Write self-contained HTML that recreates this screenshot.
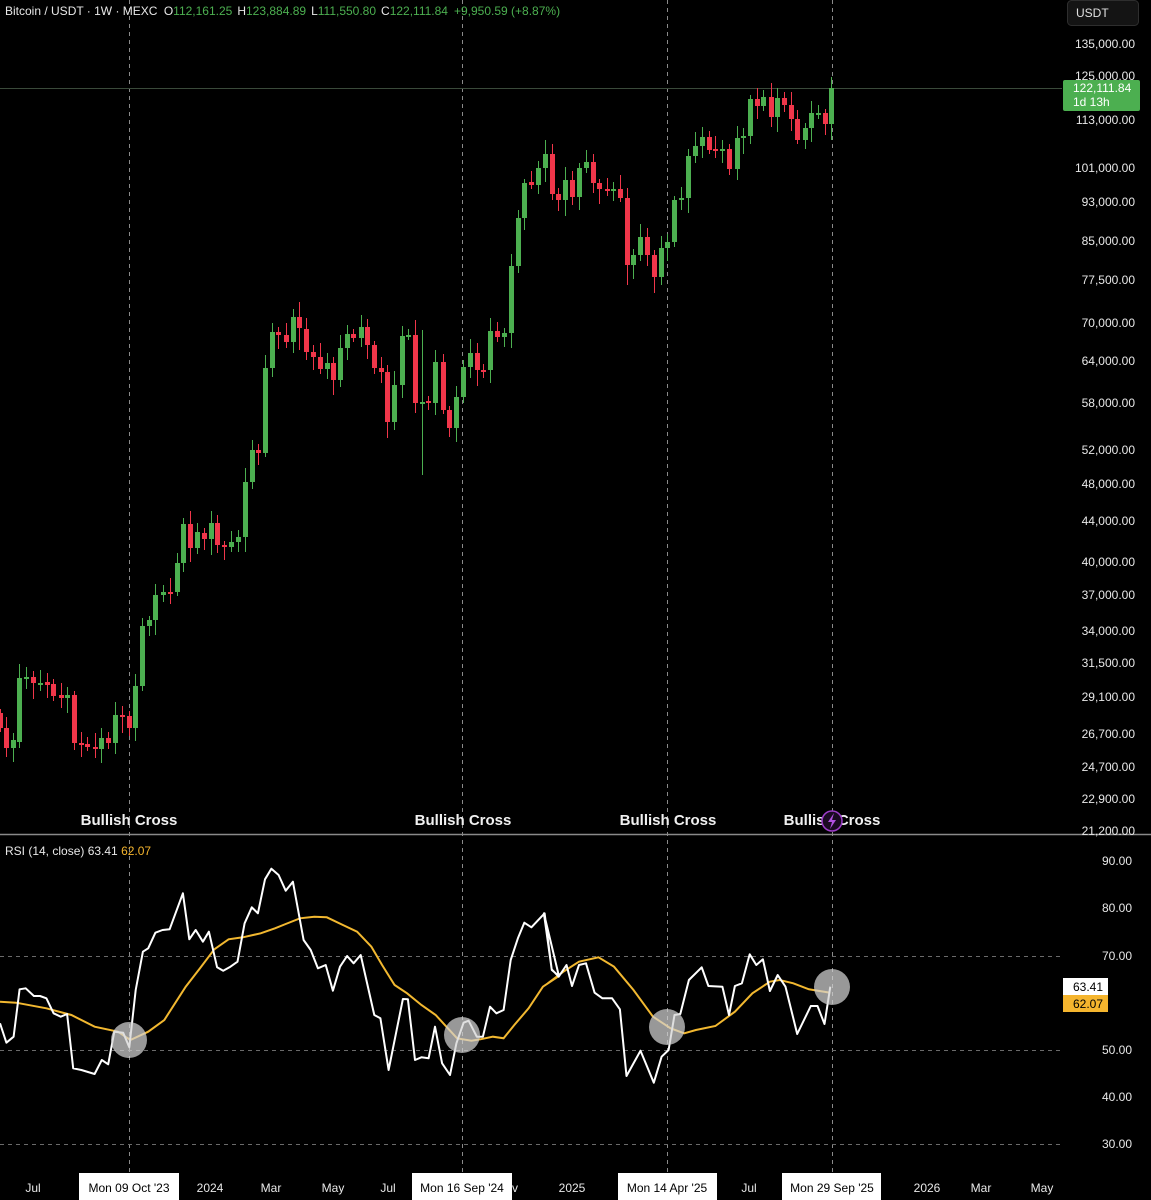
<!DOCTYPE html>
<html><head><meta charset="utf-8"><style>
html,body{margin:0;padding:0;background:#000;width:1151px;height:1200px;overflow:hidden;font-family:"Liberation Sans",sans-serif}
svg{position:absolute;left:0;top:0}
</style></head><body>
<svg id="s" width="1151" height="1200" xmlns="http://www.w3.org/2000/svg" font-family="Liberation Sans, sans-serif">
<rect width="1151" height="1200" fill="#000"/>
<g stroke="#8a8a8a" stroke-width="1" stroke-dasharray="4,4">
<line x1="129.5" y1="0" x2="129.5" y2="1172"/>
<line x1="462.5" y1="0" x2="462.5" y2="1172"/>
<line x1="667.5" y1="0" x2="667.5" y2="1172"/>
<line x1="832.5" y1="0" x2="832.5" y2="1172"/>
</g>
<g stroke="#6a6a6a" stroke-width="1" stroke-dasharray="4,4">
<line x1="0" y1="956.5" x2="1060" y2="956.5"/>
<line x1="0" y1="1050.5" x2="1060" y2="1050.5"/>
<line x1="0" y1="1144.5" x2="1060" y2="1144.5"/>
</g>
<line x1="0" y1="88.5" x2="1062" y2="88.5" stroke="#3a4a3a" stroke-width="1"/>
<line x1="0" y1="834.5" x2="1151" y2="834.5" stroke="#8a8a8a" stroke-width="1.5"/>
<g id="candles"></g>
<g id="rsi"></g>
<!-- header -->
<text x="5" y="15" font-size="12" fill="#e8e8e8">Bitcoin / USDT · 1W · MEXC <tspan dx="3">O</tspan><tspan fill="#4caf50">112,161.25</tspan><tspan dx="5">H</tspan><tspan fill="#4caf50">123,884.89</tspan><tspan dx="5">L</tspan><tspan fill="#4caf50">111,550.80</tspan><tspan dx="5">C</tspan><tspan fill="#4caf50">122,111.84</tspan><tspan dx="6" fill="#4caf50">+9,950.59 (+8.87%)</tspan></text>
<!-- USDT -->
<rect x="1067.5" y="0.5" width="71" height="25" rx="4" fill="#141414" stroke="#2e2e2e"/>
<text x="1076" y="17" font-size="12" fill="#e0e0e0">USDT</text>
<g font-size="12" fill="#e8e8e8" text-anchor="end">
<text x="1135" y="48">135,000.00</text>
<text x="1135" y="80">125,000.00</text>
<text x="1135" y="124">113,000.00</text>
<text x="1135" y="172">101,000.00</text>
<text x="1135" y="206">93,000.00</text>
<text x="1135" y="245">85,000.00</text>
<text x="1135" y="284">77,500.00</text>
<text x="1135" y="327">70,000.00</text>
<text x="1135" y="365">64,000.00</text>
<text x="1135" y="407">58,000.00</text>
<text x="1135" y="454">52,000.00</text>
<text x="1135" y="488">48,000.00</text>
<text x="1135" y="525">44,000.00</text>
<text x="1135" y="566">40,000.00</text>
<text x="1135" y="599">37,000.00</text>
<text x="1135" y="635">34,000.00</text>
<text x="1135" y="667">31,500.00</text>
<text x="1135" y="701">29,100.00</text>
<text x="1135" y="738">26,700.00</text>
<text x="1135" y="771">24,700.00</text>
<text x="1135" y="803">22,900.00</text>
<text x="1135" y="835">21,200.00</text>
<text x="1132" y="865">90.00</text>
<text x="1132" y="912">80.00</text>
<text x="1132" y="960">70.00</text>
<text x="1132" y="1054">50.00</text>
<text x="1132" y="1101">40.00</text>
<text x="1132" y="1148">30.00</text>
</g>
<rect x="0" y="835.5" width="1151" height="0" />
<rect x="1063" y="80" width="77" height="31" rx="2" fill="#4caf50"/>
<text x="1073" y="92" font-size="12" fill="#fff">122,111.84</text>
<text x="1073" y="106" font-size="12" fill="#fff">1d 13h</text>
<rect x="1063" y="978" width="45" height="17" fill="#fff"/>
<text x="1103" y="991" font-size="12" fill="#000" text-anchor="end">63.41</text>
<rect x="1063" y="995" width="45" height="17" fill="#f5b52e"/>
<text x="1103" y="1008" font-size="12" fill="#000" text-anchor="end">62.07</text>
<!-- RSI title -->
<text x="5" y="855" font-size="12" fill="#e8e8e8">RSI (14, close)  63.41 <tspan fill="#f5b52e">62.07</tspan></text>
<!-- Bullish cross -->
<g font-size="15" font-weight="bold" fill="#f0f0f0" text-anchor="middle">
<text x="129" y="825">Bullish Cross</text>
<text x="463" y="825">Bullish Cross</text>
<text x="668" y="825">Bullish Cross</text>
<text x="832" y="825">Bullish Cross</text>
</g>
<circle cx="832" cy="821" r="10" fill="#1a0a22" stroke="#9c3cc8" stroke-width="1.5"/>
<path d="M834,813 L828,822 L832,822 L830,829 L836,820 L832,820 Z" fill="#b050e0"/>
<!-- time axis -->
<g font-size="12" fill="#e8e8e8" text-anchor="middle">
<text x="33" y="1192">Jul</text>
<text x="210" y="1192">2024</text>
<text x="271" y="1192">Mar</text>
<text x="333" y="1192">May</text>
<text x="388" y="1192">Jul</text>
<text x="515" y="1192">v</text>
<text x="572" y="1192">2025</text>
<text x="749" y="1192">Jul</text>
<text x="927" y="1192">2026</text>
<text x="981" y="1192">Mar</text>
<text x="1042" y="1192">May</text>
</g>
<g font-size="12" fill="#000" text-anchor="middle">
<rect x="79" y="1173" width="100" height="27" fill="#fff"/><text x="129" y="1192">Mon 09 Oct '23</text>
<rect x="412" y="1173" width="100" height="27" fill="#fff"/><text x="462" y="1192">Mon 16 Sep '24</text>
<rect x="618" y="1173" width="99" height="27" fill="#fff"/><text x="667" y="1192">Mon 14 Apr '25</text>
<rect x="782" y="1173" width="99" height="27" fill="#fff"/><text x="832" y="1192">Mon 29 Sep '25</text>
</g>
</svg>
<script>
var C=[[0,713,728],[6,728,748],[13,748,740],[19,742,678],[26,678,677],[33,677,683],[40,683,683],[47,682,685],[53,684,696],[61,695,698],[67,698,695],[74,695,743],[81,743,745],[87,744,747],[95,747,749],[101,749,738],[108,738,743],[115,743,715],[122,715,717],[129,716,728],[135,728,686],[142,686,626],[149,626,620],[155,620,595],[163,595,592],[170,592,592],[177,592,563],[183,563,524],[190,524,548],[197,548,532],[204,533,539],[211,539,523],[217,523,545],[224,545,547],[231,547,542],[238,542,537],[245,537,482],[252,482,450],[258,450,453],[265,453,368],[272,368,332],[278,332,335],[286,335,342],[293,342,317],[299,317,328],[306,329,352],[313,352,357],[320,357,369],[327,369,363],[333,363,380],[340,380,348],[347,348,334],[353,334,338],[361,338,327],[367,327,345],[374,345,368],[381,368,372],[387,372,422],[394,422,385],[402,385,336],[408,335,335],[415,335,403],[422,402,402],[428,401,403],[435,403,362],[443,362,410],[449,410,428],[456,428,397],[463,397,367],[470,367,353],[477,353,370],[483,370,370],[490,370,331],[497,331,337],[504,337,333],[511,333,266],[518,266,218],[524,218,183],[531,182,185],[538,185,168],[545,168,154],[552,154,194],[558,194,200],[565,200,180],[572,180,197],[579,197,168],[586,168,162],[593,162,183],[599,183,189],[607,189,189],[613,189,189],[620,189,198],[627,198,265],[633,265,255],[640,255,237],[647,237,255],[654,255,277],[661,277,248],[667,248,242],[674,242,200],[681,200,198],[688,198,156],[695,156,146],[702,146,137],[709,137,150],[715,149,149],[722,149,149],[729,149,169],[737,169,138],[743,138,136],[750,136,99],[757,99,106],[763,106,97],[771,97,117],[777,117,98],[784,98,105],[791,105,119],[797,119,140],[805,140,128],[811,128,113],[818,113,113],[825,113,124],[831,124,88]];
var long={422:[330,475],415:[320,410],299:[302,350],655:[250,297],664:[250,297],627:[190,285]};
var h='';
C.forEach(function(c,i){var x=c[0],o=c[1],cl=c[2];var up=cl<o||(cl==o&&i%2==0);var col=up?'#4caf50':'#f0364a';
var t=Math.min(o,cl),b=Math.max(o,cl);var hi=t-4-(i*7%11),lo=b+4-0+(i*5%13);
if(long[x]){hi=Math.min(hi,long[x][0]);lo=Math.max(lo,long[x][1]);}
h+='<line x1="'+(x+0.5)+'" y1="'+hi+'" x2="'+(x+0.5)+'" y2="'+lo+'" stroke="'+col+'" stroke-width="1"/>';
var bh=Math.max(b-t,2);h+='<rect x="'+(x-2)+'" y="'+t+'" width="5" height="'+bh+'" fill="'+col+'"/>';});
document.getElementById('candles').innerHTML=h;
function P(a,sx,ox){return a.map(function(p){return (ox+p[0]/sx).toFixed(1)+','+(850+p[1]/3).toFixed(1)}).join(' ');}
var w1=[[0,520],[18,578],[38,560],[55,418],[72,415],[95,438],[112,438],[130,445],[150,490],[170,500],[188,492],[205,655],[228,660],[265,672],[285,630],[303,643],[320,545],[345,548],[362,592],[380,420],[400,305],[415,295],[435,248],[455,240],[475,238],[512,130],[530,268],[548,240],[568,275],[585,245],[608,352],[625,362],[645,350],[665,335],[685,220],[705,172],[722,190],[742,88],[760,56],[780,75],[800,122],[820,95],[850,270],[870,300],[890,355],[912,345],[932,422],[952,350],[972,318],[990,340],[1010,315],[1048,495],[1065,505],[1088,660],[1128,447],[1142,448],[1162,630],[1180,622],[1200,625],[1218,530],[1238,640],[1260,675],[1278,580],[1298,518],[1312,512],[1335,560],[1352,560],[1372,470],[1390,490],[1410,480],[1430,330],[1450,265],[1468,218],[1488,232],[1525,190],[1545,360],[1565,378]];
var w2=[[10,190],[30,358],[48,380],[68,345],[82,408],[100,345],[118,340],[140,428],[160,445],[185,445],[205,478],[222,678],[258,602],[292,698],[312,620],[330,600],[345,495],[360,492],[382,390],[415,352],[432,408],[468,410],[485,495],[500,408],[518,400],[538,313],[555,345],[572,328],[590,423],[610,375],[630,410],[660,552],[695,468],[712,468],[730,522],[745,410]];
var y1=[[0,455],[45,458],[130,475],[200,495],[265,530],[330,545],[365,570],[415,545],[460,510],[520,410],[560,355],[600,298],[640,268],[680,262],[730,250],[770,235],[800,222],[840,205],[880,200],[915,202],[960,225],[1000,245],[1040,290],[1070,345],[1105,405],[1140,430],[1180,465],[1220,495],[1250,530],[1280,565],[1320,572],[1345,568],[1380,560],[1410,565],[1440,525],[1480,475],[1520,410],[1565,378]];
var y2=[[20,400],[60,365],[100,335],[150,322],[190,350],[240,420],[290,500],[335,535],[370,550],[400,540],[450,528],[500,485],[545,430],[590,395],[615,390],[650,400],[690,418],[745,428]];
var r='';
r+='<polyline fill="none" stroke="#f2b830" stroke-width="2" points="'+P(y1,2.8,0)+' '+P(y2,2.566,540)+'"/>';
r+='<polyline fill="none" stroke="#fff" stroke-width="2" stroke-linejoin="round" points="'+P(w1,2.8,0)+' '+P(w2,2.566,540)+'"/>';
[[129,1040],[462,1035],[667,1027],[832,987]].forEach(function(c){r+='<circle cx="'+c[0]+'" cy="'+c[1]+'" r="18" fill="rgba(210,210,210,0.72)"/>';});
document.getElementById('rsi').innerHTML=r;
</script>
</body></html>
